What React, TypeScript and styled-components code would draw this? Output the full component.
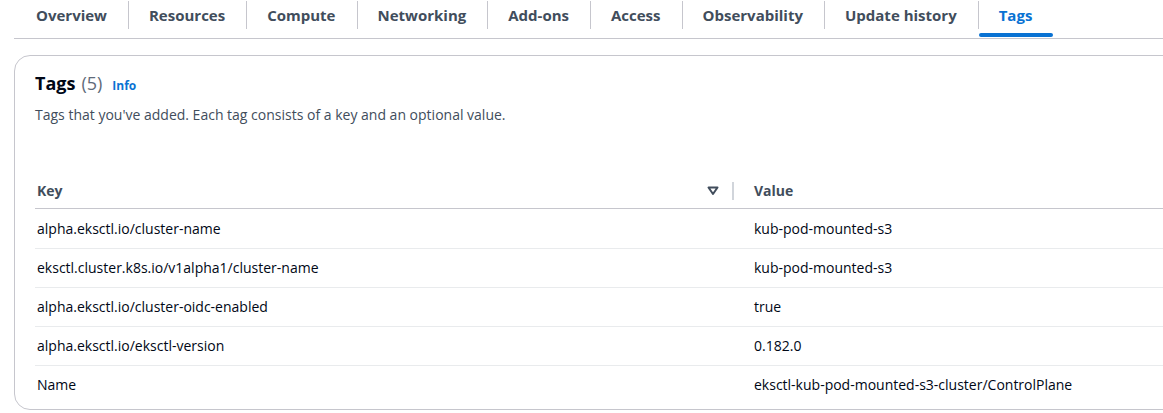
import React from 'react';
import { createGlobalStyle, styled } from 'styled-components';

const GlobalStyle = createGlobalStyle`
  body {
    margin: 0;
    background: #ffffff;
    font-family: "Open Sans", "Noto Sans", sans-serif;
    color: #000716;
    overflow: hidden;
  }
`;

const tabs = [
  'Overview',
  'Resources',
  'Compute',
  'Networking',
  'Add-ons',
  'Access',
  'Observability',
  'Update history',
  'Tags',
];

const tags = [
  { key: 'alpha.eksctl.io/cluster-name', value: 'kub-pod-mounted-s3' },
  { key: 'eksctl.cluster.k8s.io/v1alpha1/cluster-name', value: 'kub-pod-mounted-s3' },
  { key: 'alpha.eksctl.io/cluster-oidc-enabled', value: 'true' },
  { key: 'alpha.eksctl.io/eksctl-version', value: '0.182.0' },
  { key: 'Name', value: 'eksctl-kub-pod-mounted-s3-cluster/ControlPlane' },
];

const SortIcon = () => (
  <svg width="12" height="10" viewBox="0 0 12 10" fill="none">
    <path d="M1.5 1.5 H10.5 L6 8 Z" stroke="#414d5c" strokeWidth="2" strokeLinejoin="round" />
  </svg>
);

export default function App() {
  return (
    <Page>
      <GlobalStyle />
      <TabBar>
        {tabs.map((t, i) => (
          <Tab key={t} $first={i === 0} $active={t === 'Tags'}>
            {t}
          </Tab>
        ))}
      </TabBar>
      <Card>
        <Header>
          <Title>
            Tags <Count>(5)</Count>
            <InfoLink>Info</InfoLink>
          </Title>
          <Description>Tags that you've added. Each tag consists of a key and an optional value.</Description>
        </Header>
        <Table>
          <HeadRow>
            <HeadCell>
              <span>Key</span>
              <SortBox>
                <SortIcon />
              </SortBox>
            </HeadCell>
            <HeadCell $value>Value</HeadCell>
          </HeadRow>
          {tags.map((t, i) => (
            <Row key={t.key} $last={i === tags.length - 1}>
              <KeyCell>{t.key}</KeyCell>
              <ValueCell>{t.value}</ValueCell>
            </Row>
          ))}
        </Table>
      </Card>
    </Page>
  );
}

const Page = styled.div`
  padding-left: 14px;
`;

const TabBar = styled.div`
  display: flex;
  height: 38px;
  border-bottom: 1px solid #c6c6cd;
`;

const Tab = styled.div<{ $first?: boolean; $active?: boolean }>`
  position: relative;
  padding: 4px 21px 0 21px;
  font-size: 15px;
  font-weight: 700;
  line-height: 22px;
  color: ${({ $active }) => ($active ? '#0972d3' : '#414d5c')};
  white-space: nowrap;

  &:first-child {
    padding-left: 22px;
  }

  &::before {
    content: '';
    display: ${({ $first }) => ($first ? 'none' : 'block')};
    position: absolute;
    left: 0;
    top: 1px;
    height: 28px;
    width: 1px;
    background: #c6c6cd;
  }

  &::after {
    content: '';
    display: ${({ $active }) => ($active ? 'block' : 'none')};
    position: absolute;
    left: 1px;
    right: 0;
    bottom: 1px;
    height: 4px;
    border-radius: 2px;
    background: #0972d3;
  }
`;

const Card = styled.div`
  margin-top: 16px;
  margin-right: -30px;
  border: 1px solid #c6c6cd;
  border-radius: 16px;
  padding: 0 20px 5px 20px;
  background: #ffffff;
`;

const Header = styled.div`
  padding-top: 15px;
  height: 99px;
`;

const Title = styled.h2`
  margin: 0;
  display: flex;
  align-items: baseline;
  font-size: 18px;
  line-height: 24px;
  font-weight: 700;
  color: #000716;
`;

const Count = styled.span`
  margin-left: 6px;
  font-weight: 400;
  color: #5f6b7a;
`;

const InfoLink = styled.a`
  margin-left: 10px;
  font-size: 12px;
  font-weight: 700;
  color: #0972d3;
`;

const Description = styled.p`
  margin: 7px 0 0 0;
  font-size: 14px;
  line-height: 20px;
  color: #414d5c;
`;

const Table = styled.div`
  font-size: 14px;
  line-height: 20px;
`;

const HeadRow = styled.div`
  display: grid;
  grid-template-columns: 699px 1fr;
  height: 38px;
  border-bottom: 1px solid #c6c6cd;
`;

const HeadCell = styled.div<{ $value?: boolean }>`
  display: flex;
  align-items: center;
  justify-content: space-between;
  padding: 3px 0 0 ${({ $value }) => ($value ? '20px' : '2px')};
  font-weight: 700;
  color: #414d5c;
`;

const SortBox = styled.div`
  display: flex;
  align-items: center;
  gap: 13px;
  height: 18px;

  &::after {
    content: '';
    width: 2px;
    height: 18px;
    background: #d1d5db;
  }
`;

const Row = styled.div<{ $last?: boolean }>`
  display: grid;
  grid-template-columns: 699px 1fr;
  align-items: center;
  height: 38px;
  padding-top: 1px;
  box-sizing: content-box;
  margin-bottom: -1px;
  border-bottom: 1px solid ${({ $last }) => ($last ? 'transparent' : '#e9ebed')};

  &:first-of-type {
    margin-top: 0;
  }
`;

const KeyCell = styled.div`
  padding-left: 2px;
  color: #000716;
`;

const ValueCell = styled.div`
  padding-left: 20px;
  color: #000716;
`;
